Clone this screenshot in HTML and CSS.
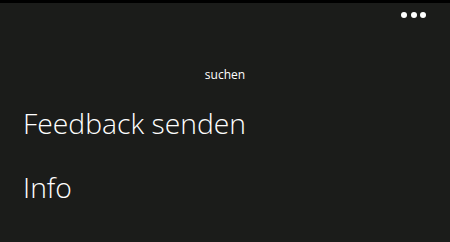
FILE: index.html
```html
<!DOCTYPE html>
<html>
<head>
<meta charset="utf-8">
<link rel="stylesheet" href="styles.css">
</head>
<body>
<div class="statusbar"></div>
<div class="page">
  <div class="appbar">
    <div class="dots"><span></span><span></span><span></span></div>
  </div>
  <div class="label">suchen</div>
  <ul class="menu">
    <li>Feedback senden</li>
    <li>Info</li>
  </ul>
</div>
</body>
</html>
```

FILE: styles.css
```css
html, body {
  margin: 0;
  padding: 0;
  background: #1b1c1a;
}
body {
  width: 450px;
  height: 242px;
  overflow: hidden;
  font-family: "Open Sans", "Noto Sans", sans-serif;
  color: #fff;
}
.statusbar {
  height: 3px;
  background: #000;
}
.page {
  display: flex;
  flex-direction: column;
}
.appbar {
  display: flex;
  justify-content: flex-end;
  padding: 9px 24px 0 0;
  height: 16px;
}
.dots {
  display: flex;
  gap: 3.5px;
}
.dots span {
  width: 6px;
  height: 6px;
  border-radius: 50%;
  background: #fff;
}
.label {
  text-align: center;
  font-size: 12px;
  line-height: 15px;
  margin-top: 39px;
}
.menu {
  list-style: none;
  margin: 9px 0 0;
  padding: 0 0 0 23px;
}
.menu li {
  font-size: 28.3px;
  font-weight: 300;
  line-height: 64px;
}
```
